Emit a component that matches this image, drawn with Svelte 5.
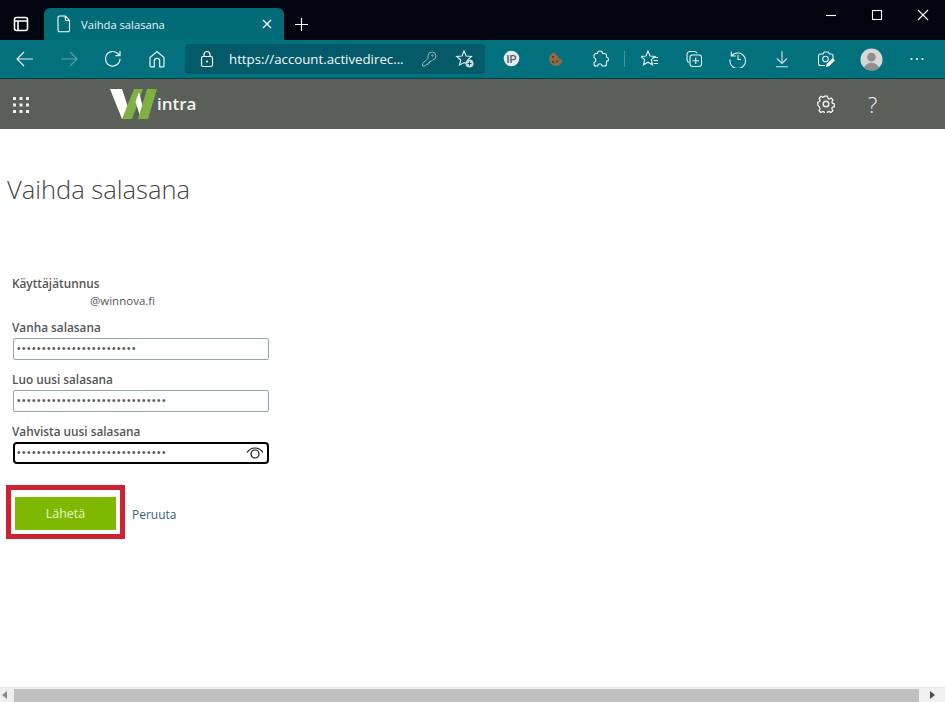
<script>
  const grid = [0, 1, 2].flatMap((y) => [0, 1, 2].map((x) => ({ x: 1 + x * 6.5, y: 1 + y * 6.5 })));
</script>

<div class="page">
  <div class="titlebar">
    <div class="tabs-btn">
      <svg width="16" height="16" viewBox="0 0 16 16" fill="none" stroke="#fff" stroke-width="1.6"><rect x="1.500" y="1.500" width="13" height="13" rx="2" /><path d="M1.500 5h13M5 5v9.500" /></svg>
    </div>
    <div class="tab">
      <svg class="doc" width="14" height="18" viewBox="0 0 14 18" fill="none" stroke="#fff" stroke-width="1.1"><path d="M2.5 1h6l4 4.500V15a1.800 1.800 0 0 1-1.800 1.800H2.800A1.800 1.800 0 0 1 1 15V2.500A1.500 1.500 0 0 1 2.500 1zM8.300 1v3.200a1.300 1.300 0 0 0 1.300 1.300h2.900" /></svg>
      <span class="tab-title">Vaihda salasana</span>
      <svg class="tab-x" width="10" height="10" viewBox="0 0 10 10" stroke="#fff" stroke-width="1.300"><path d="M1 1l8 8M9 1l-8 8" /></svg>
    </div>
    <div class="new-tab">
      <svg width="15" height="15" viewBox="0 0 15 15" stroke="#fff" stroke-width="1.200"><path d="M7.500 1v13M1 7.500h13" /></svg>
    </div>
    <div class="window">
      <div class="win-btn"><svg width="12" height="12" viewBox="0 0 12 12" stroke="#fff" stroke-width="1.100"><path d="M1 6.500h10" /></svg></div>
      <div class="win-btn"><svg width="12" height="12" viewBox="0 0 12 12" fill="none" stroke="#fff" stroke-width="1.100"><rect x="1.500" y="1.500" width="9" height="9" /></svg></div>
      <div class="win-btn"><svg width="12" height="12" viewBox="0 0 12 12" stroke="#fff" stroke-width="1.100"><path d="M1 1l10 10M11 1l-10 10" /></svg></div>
    </div>
  </div>

  <div class="toolbar">
    <div class="tool"><svg width="20" height="20" viewBox="0 0 20 20" fill="none" stroke="#e6f3f4" stroke-width="1.200"><path d="M18 10H2M9 3l-7 7 7 7" /></svg></div>
    <div class="tool"><svg width="20" height="20" viewBox="0 0 20 20" fill="none" stroke="#5f9fa8" stroke-width="1.200"><path d="M2 10h16M11 3l7 7-7 7" /></svg></div>
    <div class="tool"><svg width="20" height="20" viewBox="0 0 20 20" fill="none" stroke="#e6f3f4" stroke-width="1.200"><path d="M17 9.800a7.300 7.300 0 1 1-2.300-5.300L17 6.600M17 2v4.600h-4.600" /></svg></div>
    <div class="tool"><svg width="20" height="20" viewBox="0 0 20 20" fill="none" stroke="#e6f3f4" stroke-width="1.200"><path d="M3 8.500L10 2.500l7 6V17a.8.800 0 0 1-.8.800h-3.500V12a2.700 2.700 0 0 0-5.400 0v5.800H3.800A.8.800 0 0 1 3 17z" /></svg></div>

    <div class="address">
      <svg width="16" height="18" viewBox="0 0 16 18" fill="none" stroke="#fff" stroke-width="1.200"><rect x="2.500" y="6.500" width="11" height="10" rx="1.800" /><path d="M5 6.500V4.500a3 3 0 0 1 6 0v2" /><circle cx="8" cy="11.500" r="1" fill="#fff" stroke="none" /></svg>
      <span class="url">https://account.activedirec...</span>
      <svg class="key" width="16" height="16" viewBox="0 0 16 16" fill="none" stroke="#93b9bf" stroke-width="1"><path d="M7 4.500a4 4 0 1 1 4.500 4.500L10 10.500H8.500V12H7v1.500H5.500L4 15H1.500v-2.500L7 7.500z" /><circle cx="11.500" cy="4.500" r=".7" /></svg>
      <svg class="fav-add" width="20" height="20" viewBox="0 0 20 20" fill="none"><path d="M9 2l2.200 5 5.300.5-4 3.600 1.100 4.400L9 13.500 4.500 16l1.200-5-4-3.500L7 7z" stroke="#e6f3f4" stroke-width="1.100" /><circle cx="14.500" cy="14.500" r="4" fill="#c9d8da" /><path d="M14.500 12.500v4M12.500 14.500h4" stroke="#045a68" stroke-width="1" /></svg>
    </div>

    <div class="tools-right">
      <div class="tool"><svg width="18" height="18" viewBox="0 0 18 18"><circle cx="8.500" cy="8.500" r="7.800" fill="#e8eef0" /><text x="8.500" y="12.500" class="ip">IP</text><path d="M14.500 14.500l2 2" stroke="#12343c" stroke-width="1" /></svg></div>
      <div class="tool"><svg width="16" height="16" viewBox="0 0 16 16"><path d="M7 1.200a6.900 6.900 0 1 0 7.800 7.800c-1.300.2-2-.3-2.300-1.500-1.500 0-2.500-.8-2.500-2.300C8.800 5 7 3.500 7 1.200z" fill="#8f6a45" /><circle cx="5" cy="6" r="1" fill="#4e3820" /><circle cx="9" cy="10.500" r="1" fill="#4e3820" /><circle cx="5" cy="11" r="1" fill="#4e3820" /></svg></div>
      <div class="tool"><svg width="18" height="18" viewBox="0 0 18 18" fill="none" stroke="#e6f3f4" stroke-width="1.100"><path d="M6.500 3.500a2.500 2.500 0 0 1 5 0h2a2 2 0 0 1 2 2v1.800a2 2 0 1 1 0 4v2.700a2 2 0 0 1-2 2H11c-.3-3-4-3-4.300 0H5a2 2 0 0 1-2-2v-1.500c2.500-.3 2.500-4.500 0-4.800V5.500a2 2 0 0 1 2-2z" /></svg></div>
      <div class="sep"></div>
      <div class="tool"><svg width="18" height="18" viewBox="0 0 18 18" fill="none" stroke="#e6f3f4" stroke-width="1.100"><path d="M7 1l2.100 5 5 .4-3.800 3.300 1.200 5.100L7 12.200 2.500 14.800l1.200-5.100L0 6.400l5-.4zM12 7.500h5M12.500 10.500h4.500M12.500 13.500h4.500" /></svg></div>
      <div class="tool"><svg width="18" height="18" viewBox="0 0 18 18" fill="none" stroke="#e6f3f4" stroke-width="1.100"><path d="M4 12.500c-1.300-.5-2-1.500-2-3V4.500A3 3 0 0 1 5 1.500h4.500c1.200 0 2 .6 2.500 1.700" /><rect x="5" y="5" width="11.500" height="11.500" rx="2.500" /><path d="M10.750 7.500v6.500M7.500 10.750H14" /></svg></div>
      <div class="tool"><svg width="18" height="18" viewBox="0 0 18 18" fill="none" stroke="#e6f3f4" stroke-width="1.100"><path d="M2.500 6A7.800 7.800 0 1 1 1 9.500M2.300 1.500V6h4.500M9 5v4.500h3" /></svg></div>
      <div class="tool"><svg width="18" height="18" viewBox="0 0 18 18" fill="none" stroke="#cfe4e6" stroke-width="1.100"><path d="M9 1v12M4 8.500l5 5 5-5M3 16.800h12" /></svg></div>
      <div class="tool"><svg width="18" height="18" viewBox="0 0 18 18" fill="none"><path d="M8 15.500H3.500a2 2 0 0 1-2-2V6a2 2 0 0 1 2-2H6l1.200-2h4L12.500 4H14a2 2 0 0 1 2 2v2.500" stroke="#e6f3f4" stroke-width="1.100" /><circle cx="8.500" cy="9" r="2.800" stroke="#e6f3f4" stroke-width="1.100" /><path d="M9 17l.7-3 6-6 2.300 2.300-6 6z" fill="#fff" /></svg></div>
      <div class="tool avatar"><svg width="23" height="23" viewBox="0 0 24 24"><defs><clipPath id="av"><circle cx="12" cy="12" r="11.500" /></clipPath></defs><circle cx="12" cy="12" r="11.500" fill="#d8d8d8" /><g clip-path="url(#av)"><circle cx="12" cy="9.500" r="4.500" fill="#8f8f8f" /><ellipse cx="12" cy="22" rx="8" ry="6.500" fill="#8f8f8f" /></g></svg></div>
      <div class="tool"><svg width="14" height="4" viewBox="0 0 14 4" fill="#f2f8f8"><circle cx="1.500" cy="2" r="1.100" /><circle cx="7" cy="2" r="1.100" /><circle cx="12.500" cy="2" r="1.100" /></svg></div>
    </div>
  </div>

  <header class="appbar">
    <svg class="waffle" width="18" height="17" viewBox="0 0 18 17" fill="#eef0ee">
      {#each grid as d}<rect x={d.x} y={d.y} width="3" height="3" />{/each}
    </svg>
    <div class="logo">
      <svg width="48" height="33" viewBox="0 0 48 33">
        <path d="M0 1h12l10 30H12z" fill="#fff" />
        <path d="M12 31L24 1h9L22 31z" fill="#7fb043" />
        <path d="M29 4l7 27h-5l-5.500-17z" fill="#fff" />
        <path d="M28 31L37 1h10L38 31z" fill="#7fb043" />
      </svg>
      <span class="logo-text">intra</span>
    </div>
    <div class="app-icons">
      <svg width="18" height="18" viewBox="0 0 18 18" fill="none" stroke="#f4f5f3" stroke-width="1.400"><path d="M7.500 1h3l.5 2.300 1.500.7 2.100-1.100 2 2.200-1.200 2 .5 1.600 2.100.8v2.900l-2.100.7-.6 1.600 1.200 2-2.100 2.100-2-1.200-1.600.6-.6 2.100H7.600l-.6-2.100-1.600-.6-2 1.200-2.100-2.100 1.200-2-.6-1.600L0 10.400V7.600l2-.8.600-1.500L1.400 3.300l2.100-2.200 2 1.100 1.500-.7z" transform="scale(.92) translate(.8 .3)" /><circle cx="9" cy="9" r="2.800" /></svg>
      <span class="help">?</span>
    </div>
  </header>

  <main class="content">
    <h1>Vaihda salasana</h1>
    <form class="form">
      <div class="label">Käyttäjätunnus</div>
      <div class="username">@winnova.fi</div>

      <label class="label" for="old">Vanha salasana</label>
      <div class="input"><span class="dots" id="old">{'•'.repeat(24)}</span></div>

      <label class="label" for="new">Luo uusi salasana</label>
      <div class="input"><span class="dots" id="new">{'•'.repeat(30)}</span></div>

      <label class="label" for="conf">Vahvista uusi salasana</label>
      <div class="input focus">
        <span class="dots" id="conf">{'•'.repeat(30)}</span>
        <svg class="eye" width="18" height="14" viewBox="0 0 18 14" fill="none" stroke="#111" stroke-width="1.200"><path d="M1 6.500C5 .5 13 .5 17 6.500" /><circle cx="9" cy="8" r="4" /></svg>
      </div>

      <div class="actions">
        <div class="highlight"><div class="submit">Lähetä</div></div>
        <span class="cancel">Peruuta</span>
      </div>
    </form>
  </main>

  <div class="hscroll">
    <div class="arrow"><svg width="5" height="8" viewBox="0 0 5 8" fill="#8a8a8a"><path d="M5 0v8L0 4z" /></svg></div>
    <div class="thumb"></div>
    <div class="arrow right"><svg width="5" height="8" viewBox="0 0 5 8" fill="#4d4d4d"><path d="M0 0v8l5-4z" /></svg></div>
  </div>
</div>

<style>
  :global(body) { margin: 0; }
  .page {
    width: 945px;
    height: 702px;
    display: flex;
    flex-direction: column;
    overflow: hidden;
    background: #fff;
    font-family: "Open Sans", "Noto Sans", sans-serif;
  }
  .titlebar {
    height: 40px;
    flex: none;
    display: flex;
    align-items: flex-end;
    background: #00050f;
  }
  .tabs-btn {
    width: 44px;
    height: 32px;
    box-sizing: border-box;
    padding: 0 3px 0 0;
    display: flex;
    align-items: center;
    justify-content: center;
  }
  .tab {
    width: 240px;
    height: 32px;
    background: #026b78;
    border-radius: 6px 6px 0 0;
    display: flex;
    align-items: center;
    box-sizing: border-box;
    padding: 0 12px 0 13px;
    color: #fff;
  }
  .tab-title {
    flex: 1;
    margin-left: 10px;
    font-size: 11.200px;
    color: #e8f3f4;
  }
  .new-tab {
    width: 34px;
    height: 32px;
    display: flex;
    align-items: center;
    justify-content: center;
  }
  .window {
    margin-left: auto;
    height: 40px;
    display: flex;
    align-items: flex-start;
    margin-right: -1px;
  }
  .win-btn {
    width: 46px;
    height: 30px;
    display: flex;
    align-items: center;
    justify-content: center;
  }
  .toolbar {
    height: 38px;
    flex: none;
    background: #03707e;
    border-bottom: 1px solid #04434e;
    display: flex;
    align-items: center;
    padding-left: 3px;
  }
  .tool {
    width: 44px;
    height: 38px;
    flex: none;
    display: flex;
    align-items: center;
    justify-content: center;
  }
  .avatar { width: 48px; margin-left: -1px; }
  .address {
    width: 300px;
    height: 30px;
    margin-left: 6px;
    border-radius: 4px;
    background: #045a68;
    display: flex;
    align-items: center;
    box-sizing: border-box;
    padding-left: 14px;
    color: #fff;
  }
  .url {
    margin-left: 14px;
    width: 186px;
    font-size: 13.250px;
    color: #f2fafa;
    white-space: nowrap;
  }
  .key { margin-left: 6px; }
  .fav-add { margin-left: 18px; }
  .ip {
    font: bold 10.500px "Liberation Sans", sans-serif;
    fill: #5a6a70;
    text-anchor: middle;
  }
  .tools-right {
    display: flex;
    align-items: center;
    margin-left: 5px;
  }
  .sep {
    width: 1px;
    height: 16px;
    margin: 0 3px 0 2px;
    background: #4f939d;
  }
  .appbar {
    height: 50px;
    flex: none;
    background: #5a5f58;
    display: flex;
    align-items: center;
    position: relative;
  }
  .waffle { margin-left: 12px; }
  .logo {
    margin-left: 80px;
    display: flex;
    align-items: flex-end;
  }
  .logo-text {
    margin-left: -1px;
    margin-bottom: 7px;
    font: 600 17px/20px "Open Sans", sans-serif;
    color: #f4f5f3;
  }
  .app-icons {
    margin-left: auto;
    margin-right: 67px;
    display: flex;
    align-items: center;
    gap: 33px;
  }
  .help {
    color: #f0f2f0;
    font-size: 22px;
    font-weight: 300;
    line-height: 24px;
    width: 10px;
  }
  .content {
    flex: 1;
    min-height: 0;
    padding: 0 0 0 7px;
  }
  h1 {
    margin: 41px 0 0;
    height: 40px;
    font-size: 25.500px;
    font-weight: 300;
    line-height: 38px;
    color: #444;
  }
  .form {
    margin-top: 65px;
    margin-left: 5px;
    width: 260px;
    font-size: 12px;
    color: #555;
  }
  .label {
    display: block;
    height: 16px;
    line-height: 16px;
    font-weight: 600;
    font-size: 11.800px;
    color: #555;
  }
  .username {
    height: 18px;
    line-height: 20px;
    margin-bottom: 10px;
    padding-left: 78px;
    font-size: 11.500px;
    color: #555;
  }
  .input {
    width: 256px;
    height: 22px;
    margin: 3px 0 11px 1px;
    box-sizing: border-box;
    border: 1px solid #95a8ad;
    border-radius: 2px;
    display: flex;
    align-items: center;
    padding-left: 3px;
  }
  .input.focus {
    border: 2px solid #000;
    border-radius: 4px;
    padding-left: 2px;
    margin-bottom: 0;
  }
  .dots {
    font: 10px/12px "Liberation Sans", sans-serif;
    letter-spacing: 1.500px;
    color: #555;
    white-space: nowrap;
  }
  .eye { margin-left: auto; margin-right: 3px; }
  .actions {
    margin: 21px 0 0 -6px;
    display: flex;
    align-items: center;
  }
  .highlight {
    width: 119px;
    height: 54px;
    box-sizing: border-box;
    border: 5px solid #cc2332;
    padding: 7px 4px 4px 4px;
    display: flex;
    background: #fff;
  }
  .submit {
    width: 101px;
    height: 33px;
    background: #7fb800;
    color: #eaf5cf;
    font-size: 12.500px;
    line-height: 34px;
    text-align: center;
  }
  .cancel {
    margin: 4px 0 0 7px;
    font-size: 12px;
    color: #35647c;
  }
  .hscroll {
    height: 15px;
    flex: none;
    background: #f0f0f0;
    border-top: 1px solid #e6e6e6;
    box-sizing: border-box;
    display: flex;
    align-items: center;
  }
  .arrow {
    width: 14px;
    display: flex;
    justify-content: center;
  }
  .arrow svg { margin-right: 6px; }
  .arrow.right svg { margin-right: 0; margin-left: 0; }
  .arrow.right { margin-left: auto; width: 26px; }
  .thumb {
    width: 905px;
    height: 13px;
    background: #c0c0c0;
  }
</style>
